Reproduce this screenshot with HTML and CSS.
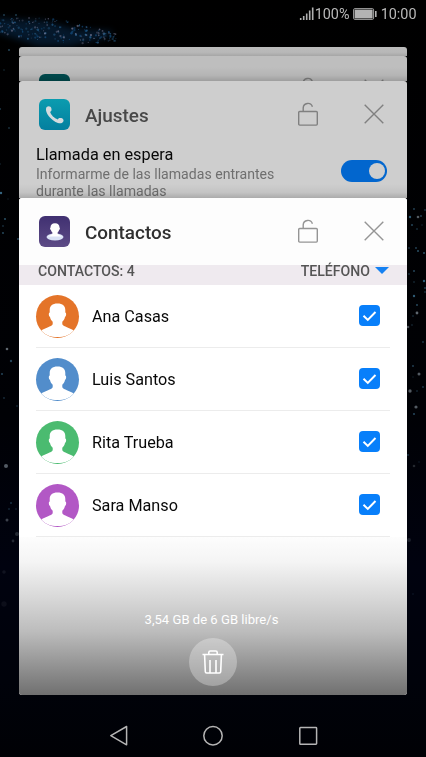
FILE: index.html
```html
<!DOCTYPE html>
<html lang="es">
<head>
<meta charset="utf-8">
<title>Aplicaciones recientes</title>
<link rel="stylesheet" href="styles.css">
</head>
<body>
<svg class="symbols" aria-hidden="true">
  <symbol id="lock" viewBox="0 0 20 24"><path d="M5.200 9.400V5.900a4.700 4.700 0 0 1 9.200-1.100M1.700 9.500h16.600a1 1 0 0 1 1 1v11.600a1 1 0 0 1-1 1H1.700a1 1 0 0 1-1-1V10.500a1 1 0 0 1 1-1z"/></symbol>
  <symbol id="close" viewBox="0 0 20 20"><path d="M.7.7l18.6 18.6M19.3.7L.7 19.3"/></symbol>
  <symbol id="person" viewBox="0 0 43 43"><path d="M21.500 8.500c5.300 0 7.800 2.600 7.800 6.500v2.400c1.300.2 1.100 3.600-.3 4.600-.4 2-1.400 3.600-2.700 4.800v2.400c1.500 2.500 7 3.600 11.500 6.200C34.500 39.800 28.500 42.100 21.500 42.100S8.500 39.800 5.200 35.400c4.500-2.600 10-3.700 11.500-6.200v-2.400c-1.300-1.200-2.300-2.800-2.700-4.800-1.400-1-1.600-4.400-.3-4.600V15c0-3.900 2.500-6.500 7.800-6.500z"/></symbol>
  <symbol id="tick" viewBox="0 0 21 21"><path d="M4.500 10.700l4.300 4.200 7.700-7.900"/></symbol>
</svg>
<div class="phone">
  <canvas class="wallpaper" width="426" height="757"></canvas>
  <header class="status">
    <svg class="signal" width="15" height="14" viewBox="0 0 15 14"><path d="M1.700 11v2M4.700 9v4M7.700 6.500V13M10.700 3.500V13M13.700.5V13"/></svg>
    <span class="percent">100%</span>
    <svg class="battery" width="24" height="12" viewBox="0 0 24 12"><rect class="case" x=".6" y=".6" width="20" height="10.800" rx="1.200"/><rect class="charge" x="1.600" y="1.600" width="18" height="8.800"/><rect class="charge" x="22" y="3" width="1.600" height="6"/></svg>
    <span class="clock">10:00</span>
  </header>
  <main class="stack">
    <section class="card card-far"></section>
    <section class="card card-mid">
      <div class="card-head">
        <span class="app-icon teal"></span><h2></h2>
        <svg class="lock"><use href="#lock"/></svg><svg class="close"><use href="#close"/></svg>
      </div>
    </section>
    <section class="card card-settings">
      <div class="card-head">
        <span class="app-icon call"><svg width="18" height="18" viewBox="0 0 18 18"><path d="M1 .8C2.700-.4 5.100.6 5.400 2.500c.2 1.400.3 2.300-1.300 3.300.9 3.300 4.300 6.500 7.600 7.600 1-1.600 2-1.600 3.400-1.400 2.300.3 3.100 2.600 1.900 4.100-1.300 1.700-4.300 1.600-7.500-.2C6 13.900 3 10.900 1.300 8-.3 5-.6 2.200 1 .8z"/></svg></span>
        <h2>Ajustes</h2>
        <svg class="lock"><use href="#lock"/></svg><svg class="close"><use href="#close"/></svg>
      </div>
      <div class="setting">
        <div class="setting-text"><h3>Llamada en espera</h3><p>Informarme de las llamadas entrantes<br>durante las llamadas</p></div>
        <span class="toggle"></span>
      </div>
    </section>
    <section class="card card-contacts">
      <div class="card-head">
        <span class="app-icon people"><svg width="18" height="20" viewBox="0 0 18 20"><ellipse class="base" cx="9" cy="15" rx="8.500" ry="3.500"/><path d="M9 1.200c3.100 0 4.500 1.700 4.500 4.200.7.300.5 2.200-.4 2.700-.3 1.200-.9 1.900-1.500 2.400v1.300c.7 1.400 3 1.400 4.400 2.600H2c1.400-1.200 3.700-1.200 4.400-2.600v-1.300c-.6-.5-1.200-1.200-1.500-2.400-.9-.5-1.100-2.400-.4-2.700 0-2.500 1.400-4.200 4.500-4.200z"/></svg></span>
        <h2>Contactos</h2>
        <svg class="lock"><use href="#lock"/></svg><svg class="close"><use href="#close"/></svg>
      </div>
      <div class="filter"><span>CONTACTOS: 4</span><span class="source">TELÉFONO<i class="caret"></i></span></div>
      <ul class="contacts">
        <li><svg class="avatar orange"><use href="#person"/></svg><span>Ana Casas</span><svg class="check"><use href="#tick"/></svg></li>
        <li><svg class="avatar blue"><use href="#person"/></svg><span>Luis Santos</span><svg class="check"><use href="#tick"/></svg></li>
        <li><svg class="avatar green"><use href="#person"/></svg><span>Rita Trueba</span><svg class="check"><use href="#tick"/></svg></li>
        <li><svg class="avatar purple"><use href="#person"/></svg><span>Sara Manso</span><svg class="check"><use href="#tick"/></svg></li>
      </ul>
      <div class="memory">
        <p>3,54 GB de 6 GB libre/s</p>
        <button class="clear" aria-label="Cerrar todo"><svg width="22" height="24" viewBox="0 0 22 24"><path d="M.5 4.500h21M6.800 4.200V2.500c0-.9.500-1.500 1.400-1.500h5.600c.9 0 1.400.6 1.400 1.500v1.700M2.600 4.800l.7 16.700c0 1 .5 1.500 1.400 1.500h12.600c.9 0 1.400-.5 1.400-1.500l.7-16.700M8 10v12.500M14 10v12.500"/></svg></button>
      </div>
    </section>
  </main>
  <nav class="navbar">
    <svg width="20" height="22" viewBox="0 0 20 22"><path d="M17.600 1.500v18.300L1.800 10.700z"/></svg>
    <svg width="20" height="22" viewBox="0 0 20 22"><circle cx="10" cy="10.800" r="9.200"/></svg>
    <svg width="20" height="22" viewBox="0 0 20 22"><rect x="1.800" y="2.500" width="16.800" height="16.800" rx=".7"/></svg>
  </nav>
</div>
<script src="wallpaper.js"></script>
</body>
</html>
```
FILE: styles.css
```css
* { box-sizing: border-box; margin: 0; padding: 0; }
body { width: 426px; height: 757px; overflow: hidden; background: #000; font-family: Roboto, "Noto Sans", sans-serif; }
.symbols { position: absolute; width: 0; height: 0; }
svg { display: block; flex: none; fill: none; }
.phone { position: relative; height: 757px; display: flex; flex-direction: column; isolation: isolate; }
.wallpaper { position: absolute; inset: 0; z-index: -1; }

.status { height: 47px; flex: none; display: flex; align-items: flex-start; justify-content: flex-end; padding: 6px 9.500px 0 0; color: #b9b9b9; font-size: 14.400px; line-height: 17px; }
.signal { margin: 1px 1px 0 0; stroke: #b0b0b0; stroke-width: 1.600; }
.percent { width: 35px; white-space: nowrap; margin-right: 3px; }
.battery { margin: 2px 4px 0 0; }
.case { stroke: #a0a0a0; stroke-width: 1; }
.charge { fill: #b3b3b3; }

.stack { width: 388px; margin-left: 19px; display: flex; flex-direction: column; }
.card { overflow: hidden; border-radius: 3px 3px 0 0; flex: none; position: relative; }
.card-far { height: 9px; background: linear-gradient(#bcbcbc, #b7b7b7 60%, #a6a6a6); }
.card-mid { height: 25px; background: #bebebe; }
.card-settings { height: 117px; background: #cecece; }
.card-mid::after, .card-settings::after { content: ""; position: absolute; left: 0; right: 0; bottom: 0; height: 14px; background: linear-gradient(transparent, rgba(0,0,0,.05) 60%, rgba(0,0,0,.17)); }
.card-contacts { height: 497px; background: #fff; border-radius: 3px; display: flex; flex-direction: column; }
.card-head { height: 67px; display: flex; align-items: flex-start; padding: 18px 23px 0 20px; flex: none; }
.card-contacts .card-head { background: #fdfdfd; }
.app-icon { width: 31px; height: 31px; border-radius: 6px; display: flex; align-items: center; justify-content: center; flex: none; }
.teal { background: #004b4e; }
.call { background: linear-gradient(#0b9caf, #047f9f); }
.call svg { fill: #d5dadd; }
.people { background: linear-gradient(#403071, #5d4b86); }
.people path { fill: #fff; }
.people .base { fill: #d9e1f5; }
h2 { flex: 1; margin-left: 15px; font-size: 18.900px; line-height: 34px; font-weight: 500; color: #484848; }
.card-contacts h2 { color: #303030; }
.lock { width: 20px; height: 24px; stroke: #808080; stroke-width: 1.400; margin: 3px 46px 0 0; }
.close { width: 20px; height: 20px; stroke: #808080; stroke-width: 1.400; margin-top: 5px; }
.card-contacts .lock, .card-contacts .close { stroke: #959595; }

.setting { display: flex; justify-content: space-between; padding: 0 20px 0 17px; margin-top: -4px; }
.setting-text { white-space: nowrap; }
h3 { font-size: 16.300px; line-height: 21px; font-weight: 400; color: #080808; }
.setting p { font-size: 14.100px; line-height: 16.500px; color: #6f6f6f; margin-top: 1px; }
.toggle { width: 46px; height: 22px; border-radius: 11px; background: #0266ce; margin-top: 16px; padding: 3px 2px 3px 3px; display: flex; justify-content: flex-end; }
.toggle::after { content: ""; width: 16px; height: 16px; border-radius: 50%; background: #cecece; }

.filter { height: 20px; flex: none; background: #efeaef; display: flex; justify-content: space-between; padding: 0 18px 0 19px; font-size: 14.100px; line-height: 12px; font-weight: 500; color: #555; }
.source { display: flex; }
.caret { width: 14px; height: 7px; margin: 2px 0 0 5px; background: #1581f2; clip-path: polygon(0 0, 100% 0, 50% 100%); }
.contacts { list-style: none; padding: 0 17px; }
.contacts li { height: 63px; display: flex; align-items: center; border-bottom: 1px solid #ececec; font-size: 16.200px; color: #080808; }
.contacts span { flex: 1; margin-left: 13px; }
.avatar { width: 43px; height: 43px; border-radius: 50%; fill: #fff; }
.orange { background: #e47429; }
.blue { background: #528dcb; }
.green { background: #4bbb70; }
.purple { background: #b258c5; }
.check { width: 21px; height: 21px; border-radius: 4px; background: #087ffa; stroke: #fff; stroke-width: 2; margin: -1px 10px 0 0; }
.memory { flex: 1; display: flex; flex-direction: column; align-items: center; padding-top: 74px; background: linear-gradient(#fdfdfd 0%, #f4f4f4 16%, #d6d6d6 40%, #bcbcbc 60%, #929292 82%, #707070 100%); }
.memory p { color: #fff; font-size: 13.100px; line-height: 18px; margin-right: 3px; }
.clear { width: 48px; height: 48px; margin-top: 9px; border: 0; border-radius: 50%; background: rgba(255,255,255,.3); display: flex; align-items: center; justify-content: center; }
.clear svg { stroke: #fff; stroke-width: 1.600; }
.navbar { display: flex; justify-content: space-between; padding: 30px 108.500px 0 108.500px; }
.navbar svg { stroke: #b5b5b5; stroke-width: 1.500; stroke-linejoin: round; }
```
FILE: wallpaper.js
```js
const ctx = document.querySelector('.wallpaper').getContext('2d');
let seed = 41;
const rnd = () => (seed = (seed * 16807) % 2147483647) / 2147483647;

const night = ctx.createLinearGradient(0, 0, 0, 757);
night.addColorStop(0, '#000');
night.addColorStop(0.55, '#000105');
night.addColorStop(0.75, '#00020f');
night.addColorStop(0.9, '#00020a');
night.addColorStop(1, '#000105');
ctx.fillStyle = night;
ctx.fillRect(0, 0, 426, 757);

const dot = (x, y, r, color, alpha) => {
  ctx.globalAlpha = alpha;
  ctx.fillStyle = color;
  ctx.beginPath();
  ctx.arc(x, y, r, 0, 7);
  ctx.fill();
};

// Blue band of dust narrowing towards the right
ctx.filter = 'blur(3px)';
ctx.globalAlpha = 0.8;
ctx.fillStyle = '#061e36';
ctx.beginPath();
ctx.moveTo(-5, 18);
ctx.lineTo(45, 21);
ctx.lineTo(75, 29);
ctx.lineTo(113, 31);
ctx.lineTo(108, 37);
ctx.lineTo(70, 46);
ctx.lineTo(38, 46);
ctx.lineTo(-5, 32);
ctx.fill();
ctx.filter = 'blur(0.5px)';
for (let i = 0; i < 200; i++) {
  const x = rnd() * 116;
  const mid = 25 + x * 0.11;
  const half = 3 + 9 * Math.sin(Math.PI * Math.min(1, (x + 25) / 145));
  dot(x, mid + (rnd() * 2 - 1) * half, 0.5 + rnd() * 0.7, ['#155184', '#2e6c9c', '#81829f'][i % 3], 0.25 + rnd() * 0.45);
}

// Scattered stars on both edges: x, y, radius, opacity
const stars = [
  [4, 15, 1, .5], [16, 15, 1, .5], [9, 50, 1, .6], [4, 70, .8, .4], [0, 109, 1, .5], [9, 128, 1, .4],
  [1, 193, 1.2, .9], [0, 164, .8, .4], [8, 199, .7, .3], [5, 219, 1, .7], [3, 226, .9, .4], [3, 233, .9, .7], [18, 239, 1, .6],
  [7, 349, 1.3, .8], [11, 361, 1.2, .6], [2, 374, 1, .6], [4, 398, .9, .4], [17, 406, 1, .3], [6, 466, 2, .7],
  [11, 503, 1.1, .4], [9, 509, 1, .3], [16, 509, 1, .2], [7, 520, 1.5, .5], [17, 534, 2, .3], [13, 541, 1.4, .3], [4, 572, 1.8, .14], [4, 604, 2.700, .1],
  [414, 209, .9, .6], [425, 210, 1, .4], [410, 217, 1.2, .8], [418, 217, 1.3, .7], [421, 216, .9, .6], [412, 225, 1, .6], [417, 229, .8, .6], [422, 225, .7, .4],
  [409, 248, 1, .4], [416, 248, .9, .6], [418, 251, 1, .7], [424, 253, 1, .7], [414, 271, 1, .6], [409, 274, .9, .4], [414, 282, .8, .5],
  [424, 281, 1.2, .8], [425, 288, 1, .5], [425, 292, .8, .6], [414, 296, 1.2, .8], [417, 305, .9, .7], [417, 313, 1.400, .8], [413, 316, .8, .5],
  [408, 327, 1.300, .6], [412, 325, .9, .3], [423, 342, .9, .5], [413, 366, .9, .6], [419, 374, 1.500, .7], [413, 377, .7, .3], [410, 391, 1.700, .7],
  [417, 391, .8, .5], [423, 387, .9, .5], [416, 407, 1.600, .7], [414, 414, 1.100, .6], [408, 455, 1.100, .4], [419, 462, .7, .3], [414, 466, 1.300, .3], [409, 540, 1.900, .25], [413, 594, .9, .15]
];
stars.forEach(([x, y, r, a]) => dot(x, y, r, r > 1.25 ? '#8b98a2' : '#4686aa', a * 0.85));
```
